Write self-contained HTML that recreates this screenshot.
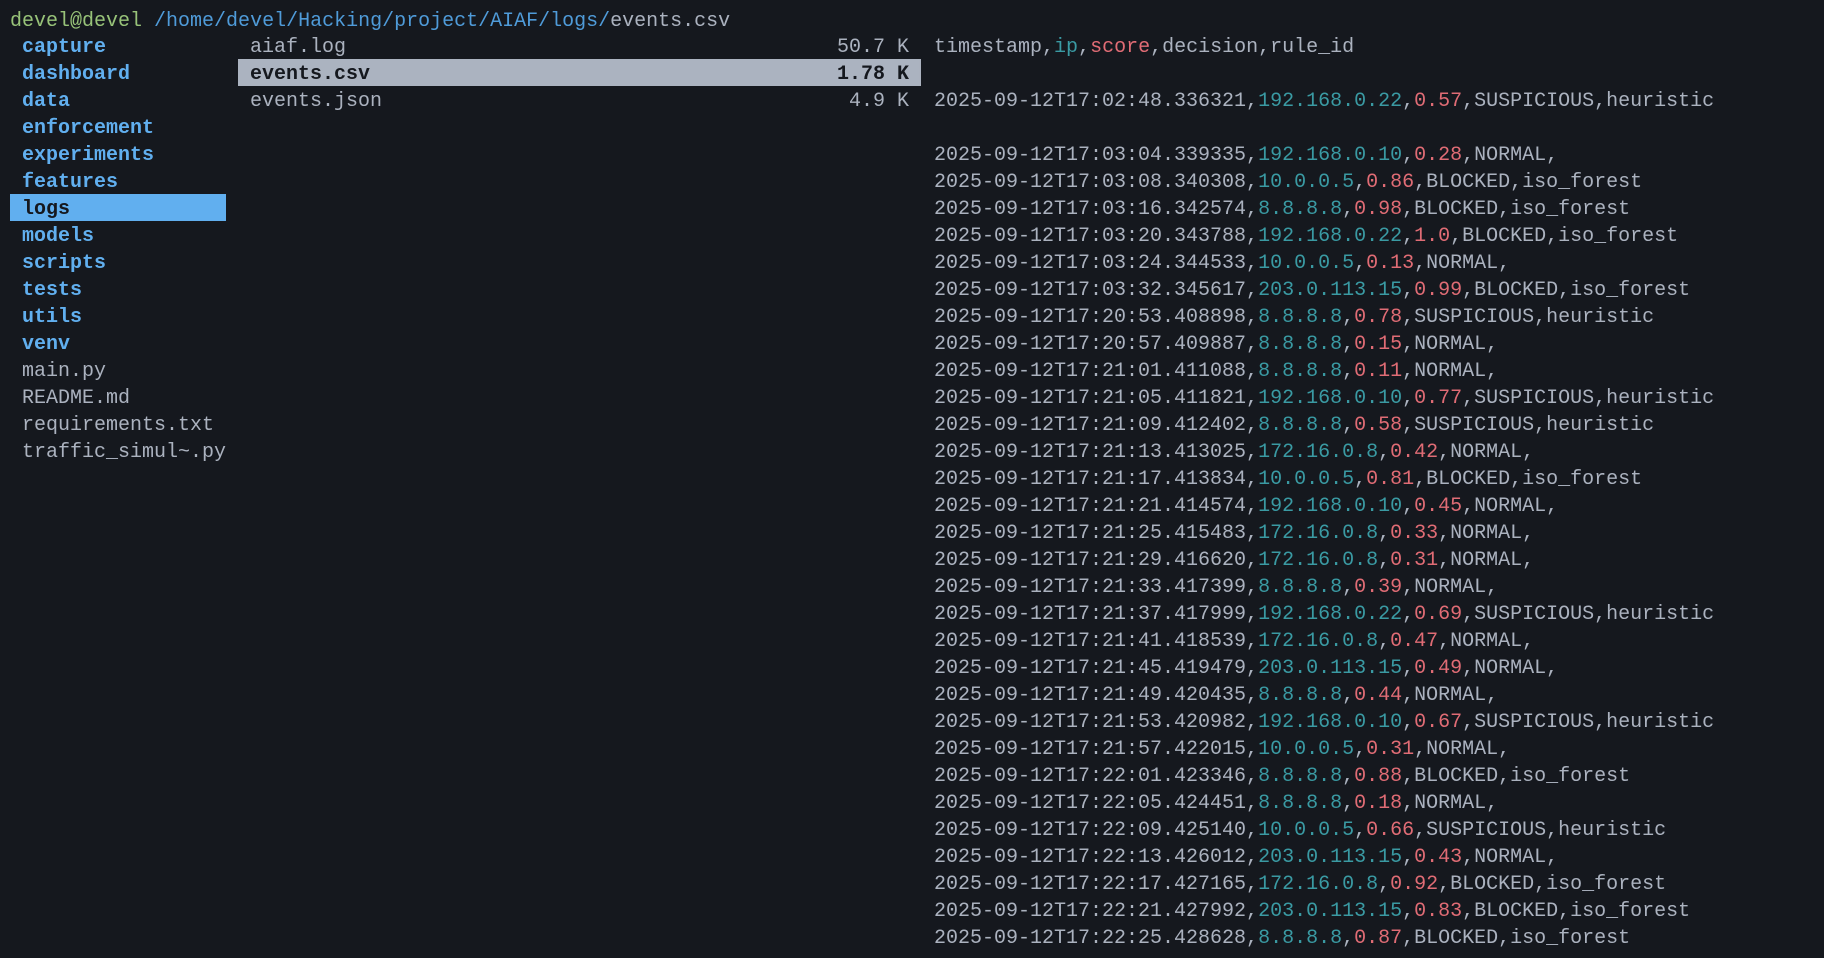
<!DOCTYPE html>
<html><head><meta charset="utf-8"><style>
html,body{margin:0;padding:0;background:#15181e;width:1824px;height:958px;overflow:hidden}
body{font-family:"Liberation Mono",monospace;font-size:20px;color:#abb2bf}
.col{position:absolute;top:32px}
.r{height:27px;line-height:31px;white-space:pre;overflow:visible}
.d{color:#61afef;font-weight:bold}
.g{color:#98c379}.b{color:#4f9bd9}
.t{color:#3a9aa3}.s{color:#e06c75}
.sel{background:#61afef;color:#15181e}
.fsel{background:#abb3c0;color:#15181e;font-weight:bold}
</style></head><body>
<div class="r" style="position:absolute;top:6px;left:10px"><span class="g">devel@devel</span> <span class="b">/home/devel/Hacking/project/AIAF/logs/</span>events.csv</div>
<div class="col" style="left:10px;width:216px">
<div class="r d" style="padding-left:12px">capture</div>
<div class="r d" style="padding-left:12px">dashboard</div>
<div class="r d" style="padding-left:12px">data</div>
<div class="r d" style="padding-left:12px">enforcement</div>
<div class="r d" style="padding-left:12px">experiments</div>
<div class="r d" style="padding-left:12px">features</div>
<div class="r d sel" style="padding-left:12px">logs</div>
<div class="r d" style="padding-left:12px">models</div>
<div class="r d" style="padding-left:12px">scripts</div>
<div class="r d" style="padding-left:12px">tests</div>
<div class="r d" style="padding-left:12px">utils</div>
<div class="r d" style="padding-left:12px">venv</div>
<div class="r" style="padding-left:12px">main.py</div>
<div class="r" style="padding-left:12px">README.md</div>
<div class="r" style="padding-left:12px">requirements.txt</div>
<div class="r" style="padding-left:12px">traffic_simul~.py</div>
</div>
<div class="col" style="left:238px;width:683px">
<div class="r" style="padding:0 12px;display:flex;justify-content:space-between"><span>aiaf.log</span><span>50.7 K</span></div>
<div class="r fsel" style="padding:0 12px;display:flex;justify-content:space-between"><span>events.csv</span><span>1.78 K</span></div>
<div class="r" style="padding:0 12px;display:flex;justify-content:space-between"><span>events.json</span><span>4.9 K</span></div>
</div>
<div style="position:absolute;left:919px;top:59px;width:2px;height:27px;background:#abb2bf"></div>
<div class="col" style="left:934px">
<div class="r">timestamp,<span class="t">ip</span>,<span class="s">score</span>,decision,rule_id</div>
<div class="r"> </div>
<div class="r">2025-09-12T17:02:48.336321,<span class="t">192.168.0.22</span>,<span class="s">0.57</span>,SUSPICIOUS,heuristic</div>
<div class="r"> </div>
<div class="r">2025-09-12T17:03:04.339335,<span class="t">192.168.0.10</span>,<span class="s">0.28</span>,NORMAL,</div>
<div class="r">2025-09-12T17:03:08.340308,<span class="t">10.0.0.5</span>,<span class="s">0.86</span>,BLOCKED,iso_forest</div>
<div class="r">2025-09-12T17:03:16.342574,<span class="t">8.8.8.8</span>,<span class="s">0.98</span>,BLOCKED,iso_forest</div>
<div class="r">2025-09-12T17:03:20.343788,<span class="t">192.168.0.22</span>,<span class="s">1.0</span>,BLOCKED,iso_forest</div>
<div class="r">2025-09-12T17:03:24.344533,<span class="t">10.0.0.5</span>,<span class="s">0.13</span>,NORMAL,</div>
<div class="r">2025-09-12T17:03:32.345617,<span class="t">203.0.113.15</span>,<span class="s">0.99</span>,BLOCKED,iso_forest</div>
<div class="r">2025-09-12T17:20:53.408898,<span class="t">8.8.8.8</span>,<span class="s">0.78</span>,SUSPICIOUS,heuristic</div>
<div class="r">2025-09-12T17:20:57.409887,<span class="t">8.8.8.8</span>,<span class="s">0.15</span>,NORMAL,</div>
<div class="r">2025-09-12T17:21:01.411088,<span class="t">8.8.8.8</span>,<span class="s">0.11</span>,NORMAL,</div>
<div class="r">2025-09-12T17:21:05.411821,<span class="t">192.168.0.10</span>,<span class="s">0.77</span>,SUSPICIOUS,heuristic</div>
<div class="r">2025-09-12T17:21:09.412402,<span class="t">8.8.8.8</span>,<span class="s">0.58</span>,SUSPICIOUS,heuristic</div>
<div class="r">2025-09-12T17:21:13.413025,<span class="t">172.16.0.8</span>,<span class="s">0.42</span>,NORMAL,</div>
<div class="r">2025-09-12T17:21:17.413834,<span class="t">10.0.0.5</span>,<span class="s">0.81</span>,BLOCKED,iso_forest</div>
<div class="r">2025-09-12T17:21:21.414574,<span class="t">192.168.0.10</span>,<span class="s">0.45</span>,NORMAL,</div>
<div class="r">2025-09-12T17:21:25.415483,<span class="t">172.16.0.8</span>,<span class="s">0.33</span>,NORMAL,</div>
<div class="r">2025-09-12T17:21:29.416620,<span class="t">172.16.0.8</span>,<span class="s">0.31</span>,NORMAL,</div>
<div class="r">2025-09-12T17:21:33.417399,<span class="t">8.8.8.8</span>,<span class="s">0.39</span>,NORMAL,</div>
<div class="r">2025-09-12T17:21:37.417999,<span class="t">192.168.0.22</span>,<span class="s">0.69</span>,SUSPICIOUS,heuristic</div>
<div class="r">2025-09-12T17:21:41.418539,<span class="t">172.16.0.8</span>,<span class="s">0.47</span>,NORMAL,</div>
<div class="r">2025-09-12T17:21:45.419479,<span class="t">203.0.113.15</span>,<span class="s">0.49</span>,NORMAL,</div>
<div class="r">2025-09-12T17:21:49.420435,<span class="t">8.8.8.8</span>,<span class="s">0.44</span>,NORMAL,</div>
<div class="r">2025-09-12T17:21:53.420982,<span class="t">192.168.0.10</span>,<span class="s">0.67</span>,SUSPICIOUS,heuristic</div>
<div class="r">2025-09-12T17:21:57.422015,<span class="t">10.0.0.5</span>,<span class="s">0.31</span>,NORMAL,</div>
<div class="r">2025-09-12T17:22:01.423346,<span class="t">8.8.8.8</span>,<span class="s">0.88</span>,BLOCKED,iso_forest</div>
<div class="r">2025-09-12T17:22:05.424451,<span class="t">8.8.8.8</span>,<span class="s">0.18</span>,NORMAL,</div>
<div class="r">2025-09-12T17:22:09.425140,<span class="t">10.0.0.5</span>,<span class="s">0.66</span>,SUSPICIOUS,heuristic</div>
<div class="r">2025-09-12T17:22:13.426012,<span class="t">203.0.113.15</span>,<span class="s">0.43</span>,NORMAL,</div>
<div class="r">2025-09-12T17:22:17.427165,<span class="t">172.16.0.8</span>,<span class="s">0.92</span>,BLOCKED,iso_forest</div>
<div class="r">2025-09-12T17:22:21.427992,<span class="t">203.0.113.15</span>,<span class="s">0.83</span>,BLOCKED,iso_forest</div>
<div class="r">2025-09-12T17:22:25.428628,<span class="t">8.8.8.8</span>,<span class="s">0.87</span>,BLOCKED,iso_forest</div>
</div>
</body></html>
